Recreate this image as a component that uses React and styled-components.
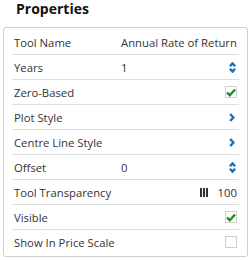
import styled, { createGlobalStyle } from "styled-components";

const GlobalStyle = createGlobalStyle`
  body {
    margin: 0;
    background: #fff;
    font-family: "Open Sans", "Liberation Sans", sans-serif;
  }
`;

const rows = [
  { label: "Tool Name", value: "Annual Rate of Return", control: null },
  { label: "Years", value: "1", control: "spin" },
  { label: "Zero-Based", control: "check", checked: true },
  { label: "Plot Style", control: "chevron" },
  { label: "Centre Line Style", control: "chevron" },
  { label: "Offset", value: "0", control: "spin" },
  { label: "Tool Transparency", control: "transparency" },
  { label: "Visible", control: "check", checked: true },
  { label: "Show In Price Scale", control: "check", checked: false },
];

const Spinner = () => (
  <svg width="7" height="11" viewBox="0 0 7 11">
    <path d="M0.9 4.2 L3.5 1.4 L6.1 4.2" fill="none" stroke="#1f6fb4" strokeWidth="2.4" />
    <path d="M0.9 6.8 L3.5 9.6 L6.1 6.8" fill="none" stroke="#1f6fb4" strokeWidth="2.4" />
  </svg>
);

const Chevron = () => (
  <svg width="6" height="9" viewBox="0 0 6 9">
    <path d="M1.2 1 L4.4 4.5 L1.2 8" fill="none" stroke="#1f6fb4" strokeWidth="2.4" />
  </svg>
);

const Check = () => (
  <svg width="10" height="9" viewBox="0 0 10 9">
    <path d="M1 4.5 L3.8 7.2 L9 1.5" fill="none" stroke="#1e8c1e" strokeWidth="2.4" />
  </svg>
);

const Control = ({ row }) => {
  if (row.control === "spin") return <Icon><Spinner /></Icon>;
  if (row.control === "chevron") return <Icon><Chevron /></Icon>;
  if (row.control === "check")
    return <Box>{row.checked && <Check />}</Box>;
  if (row.control === "transparency")
    return (
      <Transparency>
        <Bars>
          <span /><span /><span />
        </Bars>
        <span>100</span>
      </Transparency>
    );
  return null;
};

const App = () => (
  <>
    <GlobalStyle />
    <Title>Properties</Title>
    <Panel>
      {rows.map((row) => (
        <Row key={row.label}>
          <Label>{row.label}</Label>
          <Value>{row.value}</Value>
          <Control row={row} />
        </Row>
      ))}
    </Panel>
  </>
);

const Title = styled.h1`
  margin: 0;
  height: 27px;
  padding-left: 16px;
  font-size: 14px;
  font-weight: 700;
  line-height: 17px;
  color: #111;
`;

const Panel = styled.div`
  margin-left: 3px;
  width: 245px;
  box-sizing: border-box;
  border: 1px solid #cfcfcf;
  border-radius: 3px;
  padding: 2px 8px;
`;

const Row = styled.div`
  display: grid;
  grid-template-columns: 107px 1fr auto;
  align-items: center;
  height: 24px;
  padding: 0 2px;
  border-bottom: 1px solid #dcdcdc;
  font-size: 11.3px;
  color: #333;

  &:last-child {
    border-bottom: none;
  }
`;

const Label = styled.span`
  white-space: nowrap;
`;

const Value = styled.span`
  white-space: nowrap;
`;

const Icon = styled.span`
  display: flex;
  align-items: center;
  justify-content: center;
  width: 8px;
  margin-right: 1px;
`;

const Box = styled.span`
  display: flex;
  align-items: center;
  justify-content: center;
  width: 12px;
  height: 12px;
  box-sizing: border-box;
  border: 1px solid #cfcfcf;
`;

const Transparency = styled.span`
  display: flex;
  align-items: center;
  gap: 10px;
  color: #333;
`;

const Bars = styled.span`
  display: flex;
  gap: 1px;
  height: 9px;

  span {
    width: 2px;
    background: #333;
  }
`;

export default App;
